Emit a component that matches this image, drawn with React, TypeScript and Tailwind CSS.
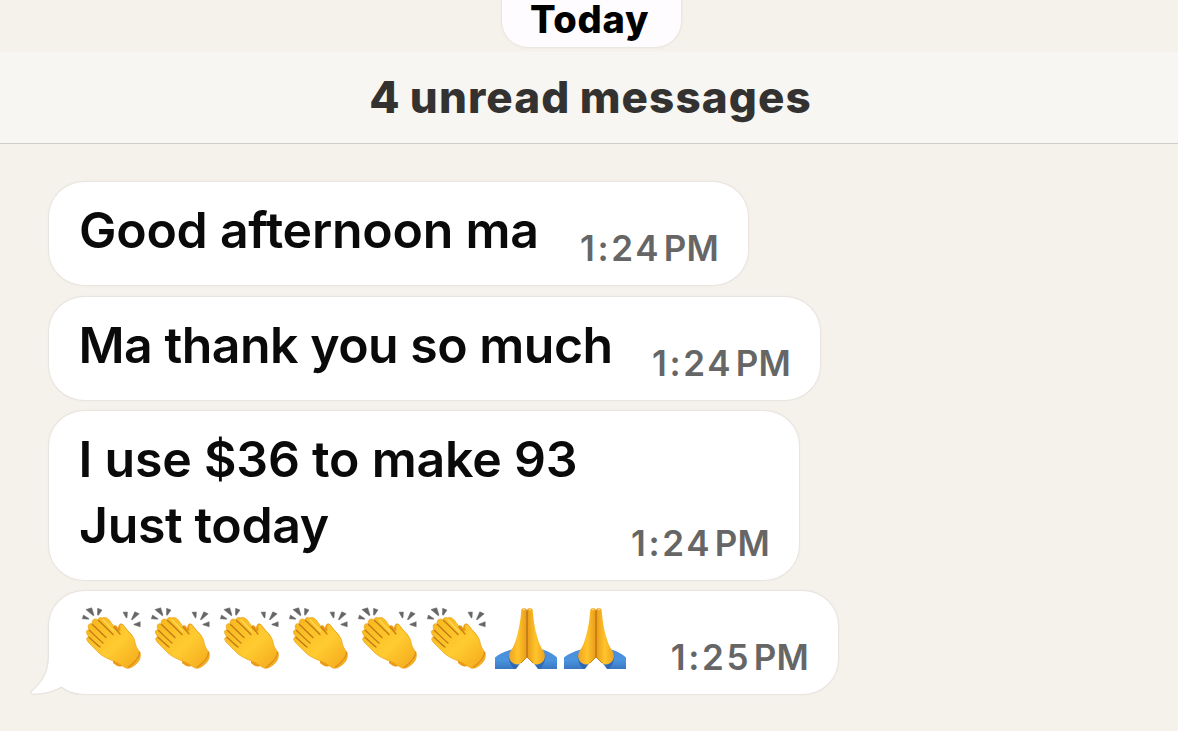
import type { ReactNode } from 'react';

const CLAP_HAND =
  'M22 12C25 10.5 28 12 30 15L36 23.5C38 26 41 26 40 22C39 18 42 17 44 20C47 25 53 29 54.5 34C55.5 38 56 42 60 46C61 50 60 55 56 58C53 61 49 63 46 62C42 60 40 58 36 56C28 53 22 50 19 47L9 37C6 34 6 31 9 31C5 26 6 24 9 24C7 19 9 17 12 18C12 13 15 12 18 14C18 12 20 11 22 12Z';

function EmojiDefs() {
  return (
    <svg width="0" height="0" className="absolute" aria-hidden="true">
      <defs>
        <linearGradient id="skin" x1="0" y1="0" x2="1" y2="1">
          <stop offset="0" stopColor="#f7b51d" />
          <stop offset="0.55" stopColor="#ffcb30" />
          <stop offset="1" stopColor="#f3a71b" />
        </linearGradient>
        <linearGradient id="palmLeft" x1="0" y1="0" x2="1" y2="0">
          <stop offset="0" stopColor="#f0a320" />
          <stop offset="0.5" stopColor="#ffc42c" />
          <stop offset="1" stopColor="#ea9c18" />
        </linearGradient>
        <linearGradient id="palmRight" x1="1" y1="0" x2="0" y2="0">
          <stop offset="0" stopColor="#f0a320" />
          <stop offset="0.5" stopColor="#ffc42c" />
          <stop offset="1" stopColor="#ea9c18" />
        </linearGradient>
        <linearGradient id="sleeve" x1="0" y1="0" x2="0" y2="1">
          <stop offset="0" stopColor="#4a8edb" />
          <stop offset="0.55" stopColor="#4a93de" />
          <stop offset="1" stopColor="#3a77c2" />
        </linearGradient>
      </defs>
    </svg>
  );
}

function Clap() {
  return (
    <svg viewBox="0 0 64 64" className="size-16 shrink-0" role="img" aria-label="clapping hands">
      {/* sound marks */}
      <g fill="#666" stroke="#666" strokeWidth="0.5" strokeLinejoin="round">
        <path d="M3.5 9 9 12.7 8.7 13.2 2.3 12.8Z" />
        <path d="M5.9 3.6 11.7 1.8 14 9.2 13.3 9.7Z" />
        <path d="M17.6 2.3 22 4 18.4 9.2 17.5 9Z" />
        <path d="M43 6.2 47.4 6 47 11.7 46.3 12Z" />
        <path d="M54.8 5.8 59.2 7.8 52 14 51.4 13.5Z" />
        <path d="M60.2 15.7V20.8L53.9 18.8V18.2Z" />
      </g>
      {/* rear hand */}
      <path
        d="M33 21C34 18 37 19 38 22C39 16 43 17 44 20L52 29C54 33 54 37 56 41L45 50 30 34ZM33 51 46 55 42 60C39 61.5 36 59.5 33 57Z"
        fill="#ea9a18"
      />
      <path d={CLAP_HAND} fill="url(#skin)" stroke="#eda01a" strokeWidth="0.7" />
      {/* finger gaps */}
      <g fill="none" stroke="#c07a14" strokeWidth="1.3" strokeLinecap="round">
        <path d="M18.5 14.5C22 17.5 28 23.5 33 28.5" />
        <path d="M12.5 18.5C16 21.5 21 27 26 31.5" />
        <path d="M9.5 24.5C13 27.5 18 33 23 37" />
        <path d="M9 31.2C12 34 16 38 20 41" />
      </g>
      <path d="M34 21 40 28" fill="none" stroke="#cc8112" strokeWidth="1.3" strokeLinecap="round" />
      <path d="M59.5 46C60 52 54 57 48 61.5" fill="none" stroke="#dd911a" strokeWidth="1.3" />
      <path d="M23 13.8 33.5 25" fill="none" stroke="#ffd650" strokeWidth="1.6" strokeLinecap="round" />
    </svg>
  );
}

function Pray() {
  return (
    <svg viewBox="0 0 64 64" className="size-16 shrink-0" role="img" aria-label="folded hands">
      <path d="M18 43.5C11 45.5 5 48 1 51.5V63H22L28 55Z" fill="url(#sleeve)" />
      <path d="M48 43.5C55 45.5 59 48 63 51.5V63H44L38 55Z" fill="url(#sleeve)" />
      <path d="M14.5 49C15.5 54 18 57.5 24.5 58.5L21.5 63H20C16 58 14.5 54 14.5 49Z" fill="#2f69b3" />
      <path d="M51.5 49C50.5 54 48 57.5 41.5 58.5L44.5 63H46C50 58 51.5 54 51.5 49Z" fill="#2f69b3" />
      <path
        d="M27.3 4C27.3 1.8 32.5 1.5 32.8 4V51L27 57C24 59.5 20 58.5 17.5 56C15 53.5 14.5 50 16 46C19.5 41 21.5 36 23 30C25 23 26.3 16 27.3 4Z"
        fill="url(#palmLeft)"
      />
      <path
        d="M38.7 4C38.7 1.8 33.3 1.5 33 4V51L39 57C42 59.5 46 58.5 48.5 56C51 53.5 51.5 50 50 46C46.5 41 44.5 36 43 30C41 23 39.7 16 38.7 4Z"
        fill="url(#palmRight)"
      />
      <path d="M33 4.5V51" stroke="#b9700f" strokeWidth="1.4" />
      <path d="M29.2 3.6H31M35 3.6H36.8" stroke="#ffd98a" strokeWidth="1.3" />
      <path d="M27 57 33 51 39 57" fill="none" stroke="#c98012" strokeWidth="1" />
    </svg>
  );
}

function Tail() {
  return (
    <svg viewBox="0 0 50 74" className="absolute -bottom-[2px] -left-[20px] h-[74px] w-[50px]">
      <path
        d="M20 0V32C19.5 46 18 56 3 69C1.5 71 2 71.8 4 71.8C15 71.8 25 69 32.5 64.5C37 68 42 71 50 71V0Z"
        fill="#fff"
      />
      <path
        d="M19.5 0V32C19 46 17.5 56 2.5 69C1.2 71 2 72.4 4 72.4C15 72.4 25 69.8 32.5 65.3C37 68.8 42 71.8 50 72.3"
        fill="none"
        stroke="#e7e3df"
        strokeWidth="1.2"
      />
    </svg>
  );
}

function Bubble({
  className,
  time,
  tail,
  children,
}: {
  className: string;
  time: string;
  tail?: boolean;
  children: ReactNode;
}) {
  return (
    <div
      className={`relative flex items-end justify-between rounded-[35px] bg-white pt-[15px] pr-[29px] pb-[17px] pl-[31px] shadow-[0_0_0_1px_#e8e4e0,0_0_2px_1px_#eeeae5] ${className}`}
    >
      {tail && <Tail />}
      <div className="relative mb-[5px] text-[50px] leading-[66px] font-[570] whitespace-nowrap text-[#0a0a0a]">
        {children}
      </div>
      <p className="flex gap-[2.5px] text-[35px] leading-10 font-[570] text-[#666]">
        <span className="tracking-[2.7px]">{time}</span>
        <span className="tracking-[0.2px]">PM</span>
      </p>
    </div>
  );
}

export default function App() {
  return (
    <main className="h-[731px] w-[1178px] overflow-hidden bg-[#f5f1eb] font-['Inter',sans-serif]">
      <EmojiDefs />

      {/* Date pill, cut off by the top edge */}
      <div className="flex h-[52px] justify-center pl-1">
        <div className="h-[47px] w-[179px] rounded-b-[26px] bg-[#fefcfe] pr-[3px] text-center text-[38px] leading-[39px] font-extrabold tracking-[0.7px] text-black shadow-[0_0_2px_1px_#e6e2dd]">
          Today
        </div>
      </div>

      {/* Unread banner */}
      <div className="flex h-[92px] justify-center border-b border-[#cfcdc9] bg-[#f7f6f2] pl-[3px]">
        <h1 className="text-[44px] leading-[90px] font-[760] tracking-[1.1px] text-[#333231] [word-spacing:-1.5px]">
          4 unread messages
        </h1>
      </div>

      <section className="flex flex-col items-start gap-3 pt-[38px] pl-[49px]">
        <Bubble className="h-[103px] w-[699px]" time="1:24">
          <p className="-ml-[1px] tracking-[-0.25px]">Good afternoon ma</p>
        </Bubble>
        <Bubble className="h-[103px] w-[771px]" time="1:24">
          <p className="-ml-[1.5px] tracking-[-0.5px]">Ma thank you so much</p>
        </Bubble>
        <Bubble className="-mt-px h-[169px] w-[750px]" time="1:24">
          <p className="-ml-[1.5px] tracking-[-0.2px]">I use $36 to make 93</p>
          <p className="-ml-[1px] tracking-[-0.35px]">Just today</p>
        </Bubble>
        <Bubble className="-mt-px h-[103px] w-[789px]" time="1:25" tail>
          <div className="flex h-[66px] gap-[5px]">
            {[...Array(6)].map((_, i) => (
              <Clap key={i} />
            ))}
            {[...Array(2)].map((_, i) => (
              <Pray key={i} />
            ))}
          </div>
        </Bubble>
      </section>
    </main>
  );
}
